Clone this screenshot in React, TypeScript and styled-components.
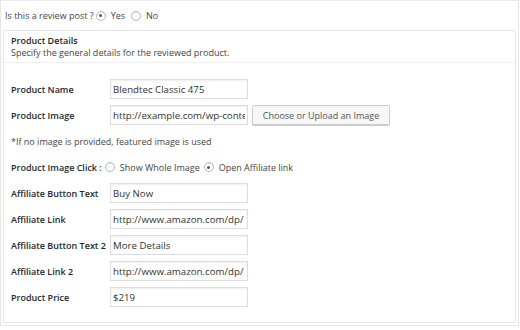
import styled, { createGlobalStyle } from 'styled-components'

const GlobalStyle = createGlobalStyle`
  html, body {
    margin: 0;
    padding: 0;
    background: #fff;
  }
  body {
    font-family: "Open Sans", "Noto Sans", "Liberation Sans", sans-serif;
    font-size: 9px;
    color: #444;
  }
`

const Frame = styled.div`
  box-sizing: border-box;
  width: 519px;
  height: 326px;
  border: 1px solid #e5e5e5;
  border-top-color: #eaeaea;
  padding: 0 2px 2px 2px;
  display: flex;
  flex-direction: column;
`

const TopLine = styled.div`
  height: 29px;
  display: flex;
  align-items: center;
  padding-left: 2px;
  gap: 2px;
  color: #444;
`

const Choice = styled.label`
  display: inline-flex;
  align-items: center;
  gap: 5px;
  margin-right: ${(p: { $space?: number }) => p.$space ?? 0}px;
`

const RadioDot = styled.span<{ $checked?: boolean }>`
  box-sizing: border-box;
  width: 10px;
  height: 10px;
  border-radius: 50%;
  border: 1px solid #b4b9be;
  background: #fff;
  box-shadow: inset 0 1px 1px rgba(0, 0, 0, 0.1);
  display: inline-flex;
  align-items: center;
  justify-content: center;
  &::after {
    content: '';
    width: 3px;
    height: 3px;
    border-radius: 50%;
    background: ${(p) => (p.$checked ? '#555' : 'transparent')};
  }
`

const Box = styled.div`
  flex: 1;
  border: 1px solid #e5e5e5;
  border-radius: 0 3px 0 0;
  display: flex;
  flex-direction: column;
`

const BoxHeader = styled.div`
  height: 32px;
  box-sizing: border-box;
  padding: 4px 7px 0;
  border-bottom: 1px solid #eee;
  line-height: 12px;
`

const BoxTitle = styled.div`
  font-weight: 600;
  color: #23282d;
`

const BoxBody = styled.div`
  padding: 16px 7px 15px;
  display: flex;
  flex-direction: column;
  gap: 6px;
`

const Row = styled.div`
  height: 20px;
  display: flex;
  align-items: center;
`

const Label = styled.span<{ $width?: number }>`
  width: ${(p) => (p.$width ? `${p.$width}px` : 'auto')};
  flex-shrink: 0;
  font-weight: 600;
  color: #23282d;
  margin-right: ${(p) => (p.$width ? 0 : 3)}px;
`

const Field = styled.input`
  box-sizing: border-box;
  width: 138px;
  height: 20px;
  margin: 0;
  padding: 0 2px;
  border: 1px solid #ddd;
  box-shadow: inset 0 1px 2px rgba(0, 0, 0, 0.07);
  font-family: inherit;
  font-size: 9.7px;
  color: #333;
  background: #fff;
  outline: none;
`

const Button = styled.button`
  box-sizing: border-box;
  width: 138px;
  height: 20px;
  margin-left: 4px;
  padding: 0 6px;
  border: 1px solid #ccc;
  border-radius: 2px;
  background: #f7f7f7;
  box-shadow: 0 1px 0 #ccc;
  font-family: inherit;
  font-size: 9px;
  color: #555;
`

const Note = styled.span`
  color: #444;
`

const fields = [
  { label: 'Affiliate Button Text', value: 'Buy Now' },
  { label: 'Affiliate Link', value: 'http://www.amazon.com/dp/' },
  { label: 'Affiliate Button Text 2', value: 'More Details' },
  { label: 'Affiliate Link 2', value: 'http://www.amazon.com/dp/' },
  { label: 'Product Price', value: '$219' },
]

export default function App() {
  return (
    <>
      <GlobalStyle />
      <Frame>
        <TopLine>
          <span>Is this a review post ?</span>
          <Choice $space={4}>
            <RadioDot $checked />
            Yes
          </Choice>
          <Choice>
            <RadioDot />
            No
          </Choice>
        </TopLine>
        <Box>
          <BoxHeader>
            <BoxTitle>Product Details</BoxTitle>
            <div>Specify the general details for the reviewed product.</div>
          </BoxHeader>
          <BoxBody>
            <Row>
              <Label $width={99}>Product Name</Label>
              <Field readOnly value="Blendtec Classic 475" />
            </Row>
            <Row>
              <Label $width={99}>Product Image</Label>
              <Field readOnly value="http://example.com/wp-content/uploads/blendtec.jpg" />
              <Button>Choose or Upload an Image</Button>
            </Row>
            <Row>
              <Note>*If no image is provided, featured image is used</Note>
            </Row>
            <Row>
              <Label>Product Image Click :</Label>
              <Choice $space={4}>
                <RadioDot />
                Show Whole Image
              </Choice>
              <Choice>
                <RadioDot $checked />
                Open Affiliate link
              </Choice>
            </Row>
            {fields.map((f) => (
              <Row key={f.label}>
                <Label $width={99}>{f.label}</Label>
                <Field readOnly value={f.value} />
              </Row>
            ))}
          </BoxBody>
        </Box>
      </Frame>
    </>
  )
}
